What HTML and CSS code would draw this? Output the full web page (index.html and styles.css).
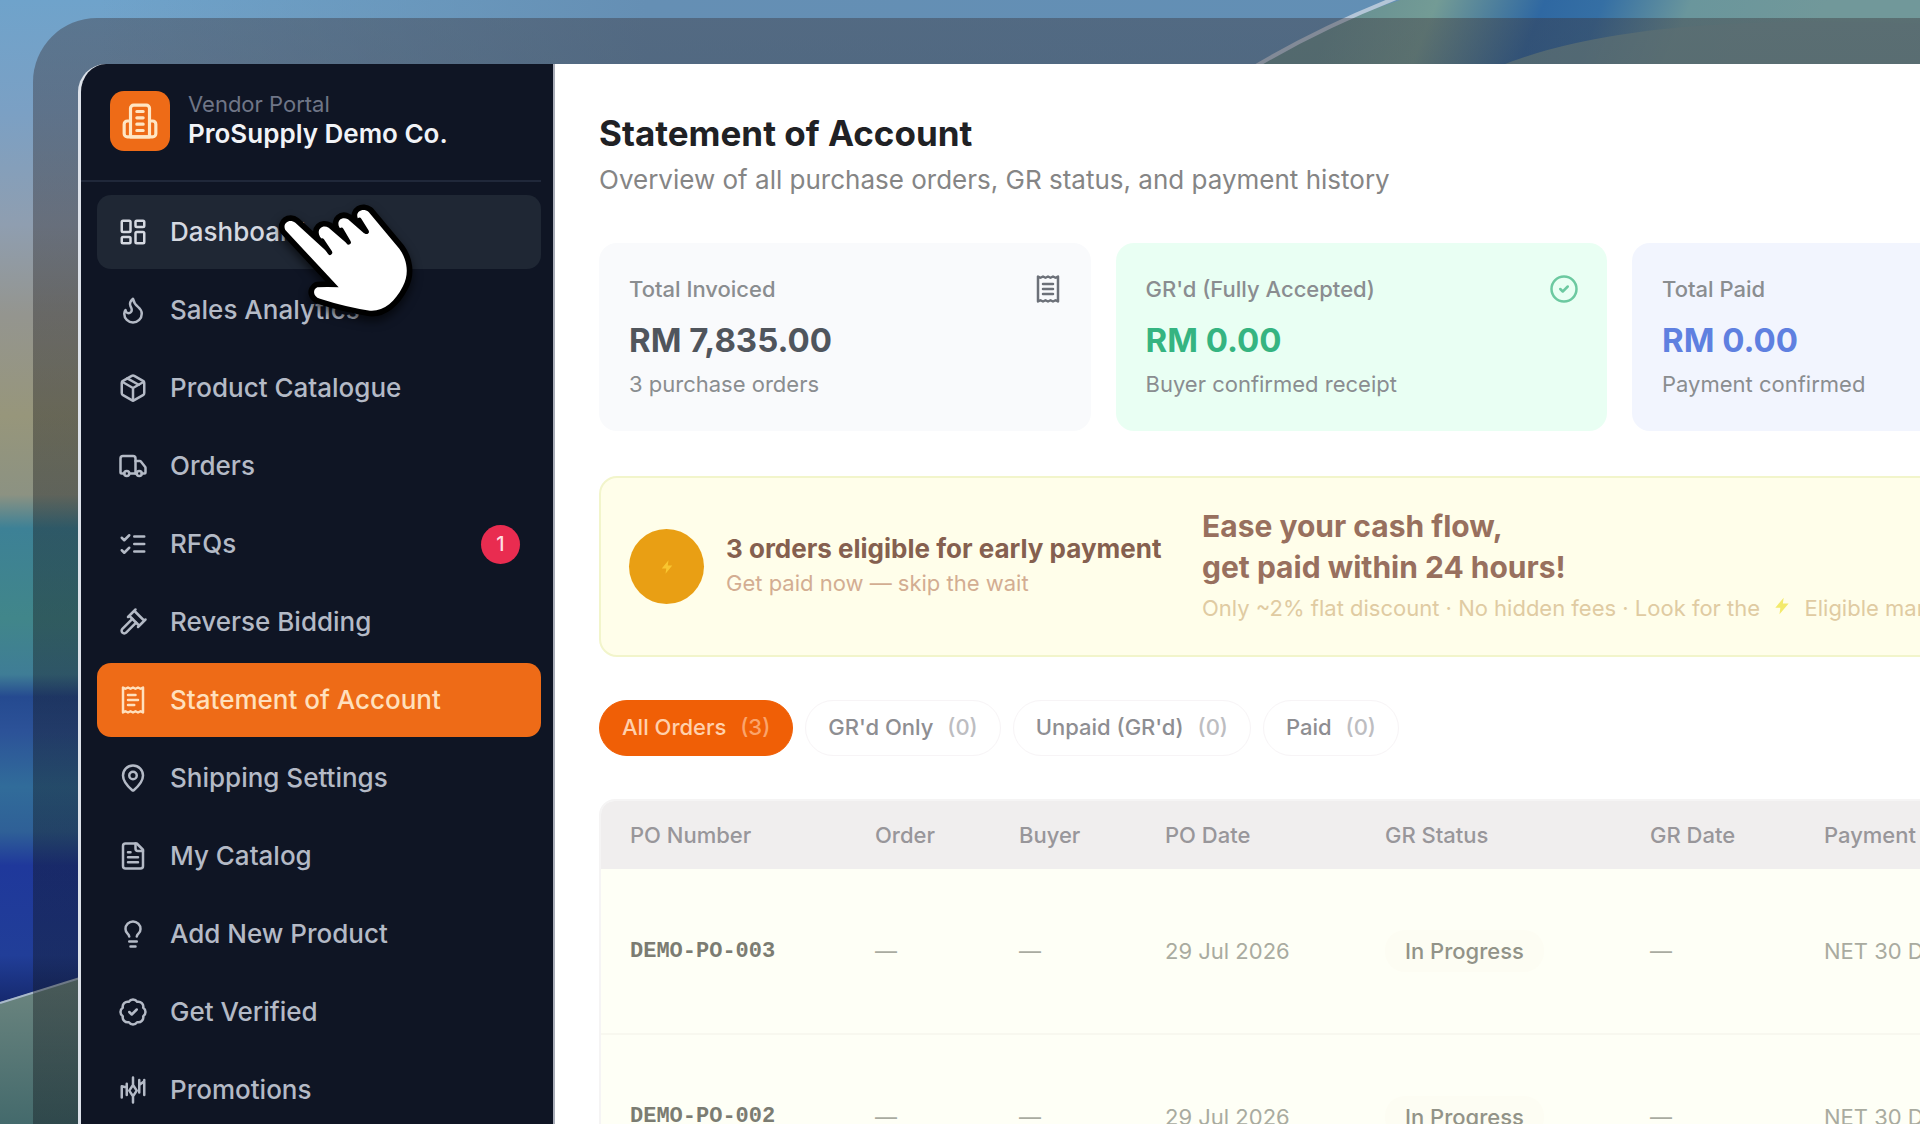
FILE: index.html
```html
<!DOCTYPE html>
<html lang="en">
<head>
<meta charset="utf-8">
<title>Statement of Account – Vendor Portal</title>
<link rel="stylesheet" href="styles.css">
</head>
<body>
<svg class="wallpaper" viewBox="0 0 1920 1124" preserveAspectRatio="none" aria-hidden="true">
  <defs>
    <linearGradient id="sky" x1="0" y1="0" x2="0" y2="1">
      <stop offset="0" stop-color="#6fa3cb"/>
      <stop offset=".1" stop-color="#7ba0c4"/>
      <stop offset=".2" stop-color="#8f9eb0"/>
      <stop offset=".28" stop-color="#94958f"/>
      <stop offset=".37" stop-color="#97967b"/>
      <stop offset=".44" stop-color="#8c9282"/>
      <stop offset=".47" stop-color="#3d8196"/>
      <stop offset=".55" stop-color="#41868a"/>
      <stop offset=".6" stop-color="#3f7d96"/>
      <stop offset=".62" stop-color="#254a90"/>
      <stop offset=".65" stop-color="#2c5298"/>
      <stop offset=".7" stop-color="#316c9a"/>
      <stop offset=".74" stop-color="#2f6097"/>
      <stop offset=".77" stop-color="#1f389b"/>
      <stop offset=".85" stop-color="#213e98"/>
      <stop offset=".89" stop-color="#162a70"/>
    </linearGradient>
    <linearGradient id="top" x1="0" y1="0" x2="1" y2="0">
      <stop offset="0" stop-color="#6690b0" stop-opacity="0"/>
      <stop offset=".3" stop-color="#658fb4"/>
      <stop offset="1" stop-color="#608fb5"/>
    </linearGradient>
    <linearGradient id="hill" x1="0" y1="0" x2="0" y2="1">
      <stop offset="0" stop-color="#6d8680"/>
      <stop offset="1" stop-color="#446a6c"/>
    </linearGradient>
    <linearGradient id="leaf" x1="1340" y1="0" x2="1760" y2="170" gradientUnits="userSpaceOnUse">
      <stop offset="0" stop-color="#668f93"/>
      <stop offset=".2" stop-color="#739b95"/>
      <stop offset=".42" stop-color="#2f68a2"/>
      <stop offset=".54" stop-color="#356fa4"/>
      <stop offset=".72" stop-color="#6a969c"/>
      <stop offset="1" stop-color="#71989a"/>
    </linearGradient>
  </defs>
  <rect width="1920" height="1124" fill="url(#sky)"/>
  <rect x="100" width="1820" height="80" fill="url(#top)"/>
  <path d="M1260 64 Q1320 26 1400 0 H1920 V80 H1260Z" fill="url(#leaf)"/>
  <path d="M1470 80 Q1600 10 1920 24 V80Z" fill="#72969a" opacity=".8"/>
  <path d="M1256 66 Q1320 28 1396 -2" fill="none" stroke="#b4c6d8" stroke-width="4"/>
  <path d="M0 1002 L80 978 V1124 H0Z" fill="url(#hill)"/>
  <path d="M0 1003 L80 978" stroke="#a9b9cc" stroke-width="2"/>
</svg>

<div class="frame">
<div class="window">
  <aside class="sidebar">
    <header class="brand">
      <span class="brand-logo">
        <svg class="icon" viewBox="0 0 24 24"><path d="M6 22V4a2 2 0 0 1 2-2h8a2 2 0 0 1 2 2v18Z"/><path d="M6 12H4a2 2 0 0 0-2 2v6a2 2 0 0 0 2 2h16a2 2 0 0 0 2-2v-6a2 2 0 0 0-2-2h-2"/><path d="M10 6h4M10 10h4M10 14h4M10 18h4"/></svg>
      </span>
      <div class="brand-text">
        <span class="brand-kind">Vendor Portal</span>
        <strong class="brand-name">ProSupply Demo Co.</strong>
      </div>
    </header>
    <nav class="menu">
      <a href="#" class="item hover"><svg class="icon" viewBox="0 0 24 24"><rect x="3" y="3" width="7" height="9" rx="1"/><rect x="14" y="3" width="7" height="5" rx="1"/><rect x="14" y="12" width="7" height="9" rx="1"/><rect x="3" y="16" width="7" height="5" rx="1"/></svg><span class="label">Dashboard</span></a>
      <a href="#" class="item"><svg class="icon" viewBox="0 0 24 24"><path d="M8.500 14.500A2.500 2.500 0 0 0 11 12c0-1.380-.5-2-1-3-1.072-2.143-.224-4.054 2-6 .5 2.500 2 4.900 4 6.500 2 1.600 3 3.500 3 5.500a7 7 0 1 1-14 0c0-1.153.433-2.294 1-3a2.500 2.500 0 0 0 2.500 2.500z"/></svg><span class="label">Sales Analytics</span></a>
      <a href="#" class="item"><svg class="icon" viewBox="0 0 24 24"><path d="m7.500 4.270 9 5.150"/><path d="M21 8a2 2 0 0 0-1-1.730l-7-4a2 2 0 0 0-2 0l-7 4A2 2 0 0 0 3 8v8a2 2 0 0 0 1 1.730l7 4a2 2 0 0 0 2 0l7-4A2 2 0 0 0 21 16Z"/><path d="m3.300 7 8.700 5 8.700-5M12 22V12"/></svg><span class="label">Product Catalogue</span></a>
      <a href="#" class="item"><svg class="icon" viewBox="0 0 24 24"><path d="M14 18V6a2 2 0 0 0-2-2H4a2 2 0 0 0-2 2v11a1 1 0 0 0 1 1h2"/><path d="M15 18H9"/><path d="M19 18h2a1 1 0 0 0 1-1v-3.650a1 1 0 0 0-.22-.624l-3.480-4.350A1 1 0 0 0 17.520 8H14"/><circle cx="17" cy="18" r="2"/><circle cx="7" cy="18" r="2"/></svg><span class="label">Orders</span></a>
      <a href="#" class="item"><svg class="icon" viewBox="0 0 24 24"><path d="m3 17 2 2 4-4M3 7l2 2 4-4M13 6h8M13 12h8M13 18h8"/></svg><span class="label">RFQs</span><span class="count">1</span></a>
      <a href="#" class="item"><svg class="icon" viewBox="0 0 24 24"><path d="m14.500 12.500-8 8a2.119 2.119 0 1 1-3-3l8-8"/><path d="m16 16 6-6M8 8l6-6M9 7l8 8M21 11l-8-8"/></svg><span class="label">Reverse Bidding</span></a>
      <a href="#" class="item active" aria-current="page"><svg class="icon" viewBox="0 0 24 24"><path d="M4 2v20l2-1 2 1 2-1 2 1 2-1 2 1 2-1 2 1V2l-2 1-2-1-2 1-2-1-2 1-2-1-2 1Z"/><path d="M14 8H8M16 12H8M13 16H8"/></svg><span class="label">Statement of Account</span></a>
      <a href="#" class="item"><svg class="icon" viewBox="0 0 24 24"><path d="M20 10c0 4.993-5.539 10.193-7.399 11.799a1 1 0 0 1-1.202 0C9.539 20.193 4 14.993 4 10a8 8 0 0 1 16 0"/><circle cx="12" cy="10" r="3"/></svg><span class="label">Shipping Settings</span></a>
      <a href="#" class="item"><svg class="icon" viewBox="0 0 24 24"><path d="M15 2H6a2 2 0 0 0-2 2v16a2 2 0 0 0 2 2h12a2 2 0 0 0 2-2V7Z"/><path d="M14 2v4a2 2 0 0 0 2 2h4M10 9H8M16 13H8M16 17H8"/></svg><span class="label">My Catalog</span></a>
      <a href="#" class="item"><svg class="icon" viewBox="0 0 24 24"><path d="M15 14c.2-1 .7-1.700 1.500-2.500 1-.9 1.500-2.200 1.500-3.500A6 6 0 0 0 6 8c0 1 .2 2.200 1.500 3.500.7.7 1.300 1.500 1.500 2.500"/><path d="M9 18h6M10 22h4"/></svg><span class="label">Add New Product</span></a>
      <a href="#" class="item"><svg class="icon" viewBox="0 0 24 24"><path d="M3.850 8.620a4 4 0 0 1 4.780-4.770 4 4 0 0 1 6.740 0 4 4 0 0 1 4.780 4.780 4 4 0 0 1 0 6.740 4 4 0 0 1-4.770 4.780 4 4 0 0 1-6.750 0 4 4 0 0 1-4.780-4.770 4 4 0 0 1 0-6.760Z"/><path d="m9 12 2 2 4-4"/></svg><span class="label">Get Verified</span></a>
      <a href="#" class="item"><svg class="icon" viewBox="0 0 24 24"><path d="M3 9v9M7 7v9M12 8l3 4.500-3 4.500-3-4.500ZM12 2v6M12 17v5M17 4v10M21 4v12M3 9l4 1M17 8l4-3"/></svg><span class="label">Promotions</span></a>
    </nav>
  </aside>

  <main class="main">
    <h1 class="title">Statement of Account</h1>
    <p class="subtitle">Overview of all purchase orders, GR status, and payment history</p>

    <section class="stats">
      <article class="stat neutral">
        <div class="stat-head"><span>Total Invoiced</span><svg class="icon" viewBox="0 0 24 24"><path d="M4 2v20l2-1 2 1 2-1 2 1 2-1 2 1 2-1 2 1V2l-2 1-2-1-2 1-2-1-2 1-2-1-2 1Z"/><path d="M16 8H8M16 12H8M16 16H8"/></svg></div>
        <strong class="stat-value">RM 7,835.00</strong>
        <span class="stat-note">3 purchase orders</span>
      </article>
      <article class="stat green">
        <div class="stat-head"><span>GR'd (Fully Accepted)</span><svg class="icon" viewBox="0 0 24 24"><circle cx="12" cy="12" r="10"/><path d="m9 12 2 2 4-4"/></svg></div>
        <strong class="stat-value">RM 0.00</strong>
        <span class="stat-note">Buyer confirmed receipt</span>
      </article>
      <article class="stat blue">
        <div class="stat-head"><span>Total Paid</span></div>
        <strong class="stat-value">RM 0.00</strong>
        <span class="stat-note">Payment confirmed</span>
      </article>
    </section>

    <section class="banner">
      <span class="bolt"><svg viewBox="0 0 24 24"><path d="M14 3 5 14h6l-1 7 9-11h-6Z"/></svg></span>
      <div class="banner-lead">
        <strong>3 orders eligible for early payment</strong>
        <span>Get paid now — skip the wait</span>
      </div>
      <div class="banner-pitch">
        <strong>Ease your cash flow,<br>get paid within 24 hours!</strong>
        <span>Only ~2% flat discount · No hidden fees · Look for the <svg class="spark" viewBox="0 0 24 24"><path d="M14 2 4 14h6l-1 8L20 9h-7Z"/></svg> Eligible mark</span>
      </div>
    </section>

    <div class="filters">
      <button type="button" class="pill selected">All Orders <span>(3)</span></button>
      <button type="button" class="pill">GR'd Only <span>(0)</span></button>
      <button type="button" class="pill">Unpaid (GR'd) <span>(0)</span></button>
      <button type="button" class="pill">Paid <span>(0)</span></button>
    </div>

    <div class="table-box">
      <table class="orders">
        <colgroup><col class="c-po"><col class="c-order"><col class="c-buyer"><col class="c-date"><col class="c-gr"><col class="c-grdate"><col></colgroup>
        <thead><tr><th>PO Number</th><th>Order</th><th>Buyer</th><th>PO Date</th><th>GR Status</th><th>GR Date</th><th>Payment</th></tr></thead>
        <tbody>
          <tr><td class="po">DEMO-PO-003</td><td>—</td><td>—</td><td>29 Jul 2026</td><td><span class="status">In Progress</span></td><td>—</td><td>NET 30 Days</td></tr>
          <tr><td class="po">DEMO-PO-002</td><td>—</td><td>—</td><td>29 Jul 2026</td><td><span class="status">In Progress</span></td><td>—</td><td>NET 30 Days</td></tr>
        </tbody>
      </table>
    </div>
  </main>
</div>
</div>

<svg class="cursor" viewBox="0 0 510 450" aria-hidden="true">
  <path class="hand" d="M76 120C66 100 88 84 106 98L206 190Q214 196 216 186L180 140C168 120 186 102 206 113L260 160Q270 162 269 152L238 112C228 92 246 78 264 88L312 130Q322 132 322 122L294 86C284 66 308 52 326 66L418 176C440 206 450 250 428 290C405 335 370 365 330 362Q254 350 180 326C160 320 156 300 172 292Q200 290 236 292Z"/>
  <path class="gap" d="M186 152 210 188M244 120 266 157M298 90 320 125"/>
</svg>
</body>
</html>
```
FILE: styles.css
```css
* { box-sizing: border-box; }

body {
  margin: 0;
  height: 100vh;
  overflow: hidden;
  position: relative;
  background: #446a6c;
  font-family: Inter, "Liberation Sans", sans-serif;
}

.wallpaper {
  position: absolute;
  inset: 0;
  width: 100%;
  height: 100%;
}

/* The window runs on past the right and bottom edges of the desktop. */
.frame {
  position: relative;
  height: 150vh;
  margin: 18px -765px 0 33px;
  padding: 46px 0 0 45px;
  border-radius: 64px 0 0 0;
  background: linear-gradient(rgba(56, 50, 56, .4), rgba(24, 24, 26, .38) 25%, rgba(14, 18, 24, .38) 50%);
}

.window {
  display: flex;
  height: 100%;
  overflow: hidden;
  border-left: 3px solid #dde2ea;
  border-radius: 28px 0 0 0;
  background: #fff;
}

.icon {
  flex: none;
  width: 30px;
  height: 30px;
  fill: none;
  stroke: currentColor;
  stroke-width: 2;
  stroke-linecap: round;
  stroke-linejoin: round;
}

/* Sidebar */
.sidebar {
  flex: none;
  width: 474px;
  padding-right: 12px;
  border-right: 2px solid #a9adb8;
  background: #0f1524;
}

.brand {
  display: flex;
  align-items: center;
  gap: 18px;
  height: 118px;
  padding: 0 29px 2px;
  border-bottom: 2px solid #20283a;
}

.brand-logo {
  display: grid;
  place-items: center;
  width: 60px;
  height: 60px;
  border-radius: 14px;
  background: #ee6b17;
  color: #ffe6c4;
}

.brand-logo .icon { width: 38px; height: 38px; }

.brand-text { display: flex; flex-direction: column; padding-bottom: 2px; }
.brand-kind { font-size: 22px; line-height: 28px; color: #6f7687; }
.brand-name { font-size: 26px; line-height: 32px; font-weight: 600; color: #f1f3f7; }

.menu {
  display: flex;
  flex-direction: column;
  gap: 4px;
  padding: 13px 0 0 16px;
}

.item {
  display: flex;
  align-items: center;
  gap: 22px;
  height: 74px;
  padding: 0 21px;
  border-radius: 14px;
  color: #b4bac6;
  text-decoration: none;
  font-size: 26px;
  font-weight: 500;
}

.item .label { padding-bottom: 2px; }
.item.hover { background: #1f2734; color: #d5d9e1; }
.item.active { background: #ee6b17; color: #ffe0bd; }

.count {
  display: grid;
  place-items: center;
  width: 39px;
  height: 39px;
  margin-left: auto;
  border-radius: 50%;
  background: #e92c50;
  color: #ffdfe2;
  font-size: 20px;
}

/* Main column */
.main {
  flex: 1;
  min-width: 0;
  padding: 48px 45px 0 44px;
}

.title { margin: 0; font-size: 35px; line-height: 42px; font-weight: 700; color: #202124; }
.subtitle { margin: 6px 0 0; font-size: 26px; line-height: 40px; color: #858585; }

.stats {
  display: grid;
  grid-template-columns: repeat(4, 1fr);
  gap: 25px;
  margin-top: 43px;
}

.stat {
  display: flex;
  flex-direction: column;
  height: 188px;
  padding: 31px 28px 0 30px;
  border-radius: 18px;
  font-size: 22px;
  color: #8a8d90;
}

.stat.neutral { background: #f9fafc; }
.stat.green { background: #e9fff3; }
.stat.blue { background: #f2f5fe; }

.stat-head {
  display: flex;
  justify-content: space-between;
  align-items: center;
  height: 30px;
  font-weight: 500;
}

.neutral .icon { color: #6c7078; }
.green .icon { color: #6cc9a0; }

.stat-value { margin-top: 14px; font-size: 33px; line-height: 44px; font-weight: 700; color: #50555c; }
.green .stat-value { color: #35b481; }
.blue .stat-value { color: #5f80e0; }
.stat-note { margin-top: 7px; line-height: 30px; }

.banner {
  display: flex;
  align-items: center;
  height: 181px;
  margin-top: 45px;
  padding: 0 28px;
  border: 2px solid #f2f5cb;
  border-radius: 18px;
  background: #fffeea;
}

.bolt {
  display: grid;
  place-items: center;
  width: 75px;
  height: 75px;
  margin-right: 22px;
  border-radius: 50%;
  background: #e99f14;
}

.bolt svg { width: 18px; height: 18px; fill: #f9c52f; }

.banner-lead, .banner-pitch { display: flex; flex-direction: column; white-space: nowrap; }
.banner-lead { width: 476px; padding-bottom: 5px; }
.banner-lead strong { font-size: 26px; line-height: 38px; color: #85604f; }
.banner-lead span { font-size: 22px; line-height: 30px; color: #d3ad92; }
.banner-pitch strong { font-size: 30px; line-height: 41px; color: #98705e; }
.banner-pitch span { font-size: 22px; line-height: 40px; color: #e0cba2; }
.spark { width: 24px; height: 20px; margin: 0 4px; fill: #f3ea6c; }

.filters { display: flex; gap: 12px; margin-top: 43px; }

.pill {
  height: 56px;
  padding: 0 22px 2px;
  border: 1px solid #f7f4f6;
  border-radius: 28px;
  background: #fff;
  color: #8e8e92;
  font: 500 22px Inter, "Liberation Sans", sans-serif;
}

.pill span { margin-left: 8px; color: #bdbdc1; }
.pill.selected { border-color: #f05f06; background: #f05f06; color: #ffd0ac; }
.pill.selected span { color: #fba46b; }

.table-box {
  margin-top: 43px;
  overflow: hidden;
  border: 2px solid #f5f4f4;
  border-radius: 16px;
}

.orders {
  width: 100%;
  border-collapse: collapse;
  table-layout: fixed;
  font-size: 22px;
  color: #a9aba0;
}

.c-po { width: 245px; }
.c-order { width: 144px; }
.c-buyer { width: 146px; }
.c-date { width: 220px; }
.c-gr { width: 265px; }
.c-grdate { width: 174px; }

.orders th, .orders td { padding: 0 0 0 29px; text-align: left; }
.orders th { height: 68px; background: #f0eeee; color: #98969a; font-weight: 500; }
.orders td { height: 165px; border-bottom: 2px solid #f8f8ef; background: #fefff6; }
.orders .po { font: 700 22px "Liberation Mono", monospace; color: #7b7c72; }

.status {
  padding: 8px 20px;
  border-radius: 20px;
  background: #fdfdf3;
  color: #929388;
  font-weight: 500;
}

/* Pointer over the menu */
.cursor {
  position: absolute;
  left: 260px;
  top: 190px;
  width: 170px;
  height: 150px;
  overflow: visible;
  filter: drop-shadow(0 5px 5px rgba(0, 0, 0, .6));
}

.hand { fill: #fff; stroke: #000; stroke-width: 34; stroke-linejoin: round; paint-order: stroke; }
.gap { fill: none; stroke: #000; stroke-width: 14; stroke-linecap: round; }
```
